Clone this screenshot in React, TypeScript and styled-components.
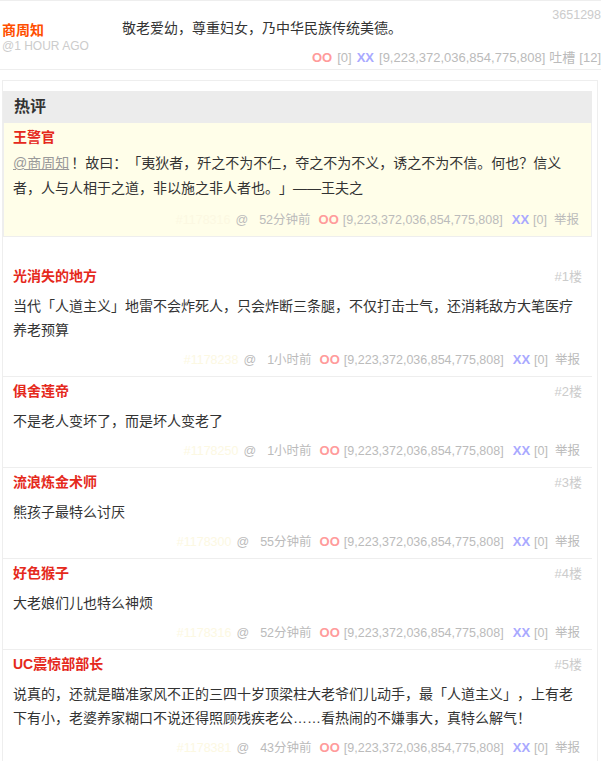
import React from "react";
import styled, { createGlobalStyle } from "styled-components";

type Vote = {
  oo: string;
  xx: string;
};

type CommentData = {
  id: string;
  author: string;
  floor: number;
  text: string;
  time: string;
  vote: Vote;
};

const BIG = "9,223,372,036,854,775,808";

const comments: CommentData[] = [
  {
    id: "1178238",
    author: "光消失的地方",
    floor: 1,
    text: "当代「人道主义」地雷不会炸死人，只会炸断三条腿，不仅打击士气，还消耗敌方大笔医疗养老预算",
    time: "1小时前",
    vote: { oo: BIG, xx: "0" },
  },
  {
    id: "1178250",
    author: "俱舍莲帝",
    floor: 2,
    text: "不是老人变坏了，而是坏人变老了",
    time: "1小时前",
    vote: { oo: BIG, xx: "0" },
  },
  {
    id: "1178300",
    author: "流浪炼金术师",
    floor: 3,
    text: "熊孩子最特么讨厌",
    time: "55分钟前",
    vote: { oo: BIG, xx: "0" },
  },
  {
    id: "1178316",
    author: "好色猴子",
    floor: 4,
    text: "大老娘们儿也特么神烦",
    time: "52分钟前",
    vote: { oo: BIG, xx: "0" },
  },
  {
    id: "1178381",
    author: "UC震惊部部长",
    floor: 5,
    text: "说真的，还就是瞄准家风不正的三四十岁顶梁柱大老爷们儿动手，最「人道主义」，上有老下有小，老婆养家糊口不说还得照顾残疾老公……看热闹的不嫌事大，真特么解气！",
    time: "43分钟前",
    vote: { oo: BIG, xx: "0" },
  },
];

const GlobalStyle = createGlobalStyle`
  body {
    margin: 0;
    background: #fff;
    color: #333;
    font-family: "Liberation Sans", "Noto Sans CJK SC", sans-serif;
    text-spacing-trim: space-all;
  }
`;

const Page = styled.div`
  width: 601px;
`;

/* ---- top post ---- */

const Post = styled.div`
  border-top: 1px solid #eee;
  border-bottom: 1px solid #eee;
  padding: 7px 0 3px;
`;

const PostId = styled.div`
  text-align: right;
  font-size: 12.5px;
  line-height: 14px;
  color: #ccc;
`;

const PostRow = styled.div`
  display: flex;
`;

const PostAuthor = styled.div`
  width: 120px;
  flex-shrink: 0;
  padding-left: 2px;
`;

const PostName = styled.div`
  font-size: 14px;
  font-weight: bold;
  line-height: 16px;
  color: #ff4f00;
`;

const PostTime = styled.div`
  font-size: 12px;
  line-height: 16px;
  color: #ccc;
`;

const PostBody = styled.div`
  flex: 1;
`;

const PostText = styled.div`
  font-size: 14px;
  line-height: 16px;
  margin-top: -2px;
  color: #333;
`;

const PostFooter = styled.div`
  margin-top: 14px;
  display: flex;
  justify-content: flex-end;
  align-items: baseline;
  font-size: 13px;
  line-height: 16px;
  color: #bbb;
`;

/* ---- hot + comments card ---- */

const Card = styled.div`
  margin: 10px 3px 0 2px;
  border: 1px solid #eee;
  border-bottom: none;
  padding: 10px 5px 20px 0;
`;

const HotTitle = styled.div`
  height: 32px;
  line-height: 32px;
  padding-left: 11px;
  background: #ececec;
  font-size: 16px;
  font-weight: bold;
  color: #333;
`;

const HotBox = styled.div`
  background: #fffee9;
  border: 1px solid #eee;
  border-top: none;
  padding: 4px 10px 6px 9px;
`;

const CommentList = styled.div`
  margin-top: 25px;
`;

const CommentItem = styled.div`
  padding: 4px 10px 6px;
  border-bottom: 1px solid #eee;
`;

const CommentHead = styled.div`
  display: flex;
  justify-content: space-between;
  align-items: baseline;
  line-height: 20px;
`;

const Author = styled.span`
  font-size: 14px;
  font-weight: bold;
  color: #e5291c;
`;

const Floor = styled.span`
  font-size: 13px;
  color: #ccc;
`;

const CommentText = styled.div<{ $lh: number; $gap: number }>`
  margin-top: ${(p) => p.$gap}px;
  font-size: 14px;
  line-height: ${(p) => p.$lh}px;
  color: #333;
`;

const Mention = styled.span`
  margin-right: 2px;
  color: #999;
  text-decoration: underline;
`;

const Footer = styled.div<{ $gap: number }>`
  margin-top: ${(p) => p.$gap}px;
  margin-right: 2px;
  display: flex;
  justify-content: flex-end;
  align-items: baseline;
  font-size: 12.5px;
  line-height: 20px;
  color: #bbb;
`;

const Faint = styled.span`
  color: #fcf8e2;
`;

const At = styled.span`
  margin-left: 5px;
  color: #bbb;
`;

const Time = styled.span`
  margin-left: 11px;
`;

const VoteLabel = styled.span<{ $kind: "oo" | "xx"; $space: number }>`
  margin-left: ${(p) => p.$space}px;
  font-weight: bold;
  font-size: 13px;
  color: ${(p) => (p.$kind === "oo" ? "#ff9b9b" : "#a9a9ff")};
`;

const Count = styled.span<{ $space?: number }>`
  margin-left: ${(p) => p.$space ?? 4}px;
`;

const Report = styled.span`
  margin-left: 7px;
`;

function CommentFooter({
  id,
  time,
  vote,
  gap,
}: {
  id: string;
  time: string;
  vote: Vote;
  gap: number;
}) {
  return (
    <Footer $gap={gap}>
      <Faint>#{id}</Faint>
      <At>@</At>
      <Time>{time}</Time>
      <VoteLabel $kind="oo" $space={8}>
        OO
      </VoteLabel>
      <Count>[{vote.oo}]</Count>
      <VoteLabel $kind="xx" $space={9}>
        XX
      </VoteLabel>
      <Count>[{vote.xx}]</Count>
      <Report>举报</Report>
    </Footer>
  );
}

export default function App() {
  return (
    <Page>
      <GlobalStyle />
      <Post>
        <PostId>3651298</PostId>
        <PostRow>
          <PostAuthor>
            <PostName>商周知</PostName>
            <PostTime>@1 HOUR AGO</PostTime>
          </PostAuthor>
          <PostBody>
            <PostText>敬老爱幼，尊重妇女，乃中华民族传统美德。</PostText>
            <PostFooter>
              <VoteLabel $kind="oo" $space={0}>
                OO
              </VoteLabel>
              <Count $space={5}>[0]</Count>
              <VoteLabel $kind="xx" $space={5}>
                XX
              </VoteLabel>
              <Count $space={5}>[{BIG}]</Count>
              <Count $space={4}>吐槽</Count>
              <Count $space={4}>[12]</Count>
            </PostFooter>
          </PostBody>
        </PostRow>
      </Post>

      <Card>
        <HotTitle>热评</HotTitle>
        <HotBox>
          <CommentHead>
            <Author>王警官</Author>
          </CommentHead>
          <CommentText $lh={25} $gap={4}>
            <Mention>@商周知</Mention>
            ！故曰：「夷狄者，歼之不为不仁，夺之不为不义，诱之不为不信。何也？信义者，人与人相于之道，非以施之非人者也。」——王夫之
          </CommentText>
          <CommentFooter
            id="1178316"
            time="52分钟前"
            vote={{ oo: BIG, xx: "0" }}
            gap={9}
          />
        </HotBox>

        <CommentList>
          {comments.map((c) => (
            <CommentItem key={c.id}>
              <CommentHead>
                <Author>{c.author}</Author>
                <Floor>#{c.floor}楼</Floor>
              </CommentHead>
              <CommentText $lh={24} $gap={7}>
                {c.text}
              </CommentText>
              <CommentFooter id={c.id} time={c.time} vote={c.vote} gap={8} />
            </CommentItem>
          ))}
        </CommentList>
      </Card>
    </Page>
  );
}
